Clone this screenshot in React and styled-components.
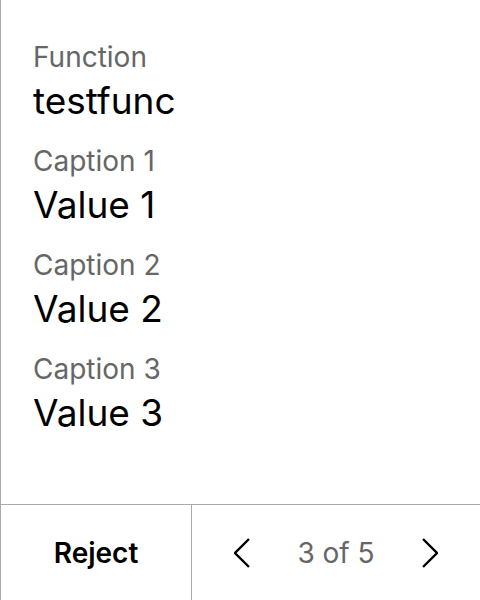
import React from 'react';
import styled, { createGlobalStyle } from 'styled-components';

const GlobalStyle = createGlobalStyle`
  html, body {
    margin: 0;
    padding: 0;
    background: #fff;
  }
  body {
    font-family: Inter, "Liberation Sans", sans-serif;
  }
`;

const fields = [
  { caption: 'Function', value: 'testfunc' },
  { caption: 'Caption 1', value: 'Value 1' },
  { caption: 'Caption 2', value: 'Value 2' },
  { caption: 'Caption 3', value: 'Value 3' },
];

function Chevron({ dir }) {
  const points = dir === 'left' ? '15,1 1,15 15,29' : '1,1 15,15 1,29';
  return (
    <svg width="16" height="30" viewBox="0 0 16 30">
      <polyline points={points} fill="none" stroke="#000" strokeWidth="2.4" />
    </svg>
  );
}

function App() {
  return (
    <>
      <GlobalStyle />
      <Panel>
        <Content>
          {fields.map((f) => (
            <Field key={f.caption}>
              <Caption>{f.caption}</Caption>
              <Value>{f.value}</Value>
            </Field>
          ))}
        </Content>
        <Footer>
          <RejectButton>Reject</RejectButton>
          <Pager>
            <ArrowButton aria-label="Previous">
              <Chevron dir="left" />
            </ArrowButton>
            <PageText>3 of 5</PageText>
            <ArrowButton aria-label="Next">
              <Chevron dir="right" />
            </ArrowButton>
          </Pager>
        </Footer>
      </Panel>
    </>
  );
}

export default App;

const Panel = styled.div`
  display: flex;
  flex-direction: column;
  height: 600px;
  box-sizing: border-box;
  border-left: 1px solid #aaa;
`;

const Content = styled.div`
  flex: 1;
  display: flex;
  flex-direction: column;
  gap: 24px;
  padding: 41px 32px 0;
`;

const Field = styled.div`
  display: flex;
  flex-direction: column;
  gap: 8px;
`;

const Caption = styled.div`
  font-size: 28px;
  line-height: 32px;
  color: #666;
`;

const Value = styled.div`
  font-size: 37px;
  line-height: 40px;
  color: #000;
`;

const Footer = styled.div`
  display: grid;
  grid-template-columns: 191px 1fr;
  height: 96px;
  box-sizing: border-box;
  border-top: 1px solid #aaa;
`;

const RejectButton = styled.button`
  border: none;
  border-right: 1px solid #aaa;
  background: none;
  font-family: inherit;
  font-size: 28px;
  font-weight: 600;
  color: #000;
  padding: 0;
  cursor: pointer;
`;

const Pager = styled.div`
  display: flex;
  align-items: center;
  justify-content: space-between;
  padding: 0 42px;
`;

const ArrowButton = styled.button`
  display: flex;
  border: none;
  background: none;
  padding: 0;
  cursor: pointer;
`;

const PageText = styled.span`
  font-size: 28px;
  color: #666;
`;
